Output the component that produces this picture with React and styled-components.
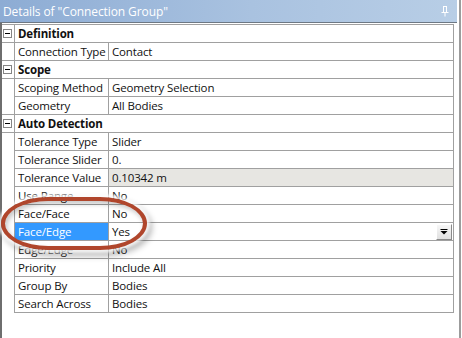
import React from "react";
import styled, { createGlobalStyle } from "styled-components";

const Global = createGlobalStyle`
  html, body { margin: 0; padding: 0; background: #fff; }
  body { font-family: "Open Sans", "Noto Sans", sans-serif; }
`;

const Frame = styled.div`
  position: relative;
  width: 462px;
  height: 338px;
  display: flex;
  background: #fff;
  overflow: hidden;
`;

const Panel = styled.div`
  width: 457px;
  display: flex;
  flex-direction: column;
`;

const RightEdge = styled.div`
  width: 2px;
  margin-left: 2px;
  background: #9c9c9c;
`;

const TitleBar = styled.div`
  height: 22px;
  border-bottom: 1px solid #6d7884;
  background: linear-gradient(to right, #8dacd4 0%, #a9c2e0 55%, #b8cee6 100%);
  display: flex;
  align-items: center;
  justify-content: space-between;
  padding: 0 8px 0 3px;
  color: #fff;
  font-size: 12px;
  letter-spacing: -0.1px;
  white-space: nowrap;
`;

const Body = styled.div`
  flex: 1;
  border-left: 2px solid #6e6e6e;
  padding: 1px 3px 0 0;
`;

const Row = styled.div`
  display: grid;
  grid-template-columns: 12px 94px 346px;
  height: ${(p) => (p.$first ? 19 : 18)}px;
  font-size: 11.5px;
  letter-spacing: -0.15px;
  line-height: 17px;
  color: #111;
`;

const Gutter = styled.div`
  border-top: ${(p) => (p.$first ? "1px solid #a0a0a0" : "none")};
  border-bottom: ${(p) => (p.$line ? "1px solid #a0a0a0" : "none")};
  display: flex;
  align-items: flex-start;
`;

const Cell = styled.div`
  border-left: 1px solid #a0a0a0;
  border-bottom: 1px solid #a0a0a0;
  border-top: ${(p) => (p.$first ? "1px solid #a0a0a0" : "none")};
  padding-left: 3px;
  white-space: nowrap;
  overflow: hidden;
`;

const LabelCell = styled(Cell)`
  background: ${(p) => (p.$selected ? "#3399ff" : "#fff")};
  color: ${(p) => (p.$selected ? "#fff" : "#111")};
`;

const ValueCell = styled(Cell)`
  border-right: 1px solid #a0a0a0;
  background: ${(p) => (p.$shaded ? "#e7e6e2" : "#fff")};
  display: flex;
  justify-content: space-between;
`;

const HeaderCell = styled(Cell)`
  grid-column: 2 / span 2;
  border-right: 1px solid #a0a0a0;
  font-weight: 700;
`;

const MinusBox = styled.div`
  box-sizing: border-box;
  width: 9px;
  height: 9px;
  margin: 4px 0 0 1px;
  border: 1px solid #858585;
  background: #fff;
  display: flex;
  align-items: center;
  justify-content: center;
  &::after {
    content: "";
    width: 5px;
    height: 1px;
    background: #000;
  }
`;

const DropButton = styled.div`
  box-sizing: border-box;
  width: 16px;
  height: 16px;
  margin: 1px 1px 0 0;
  background: linear-gradient(#f7f7f7, #e0e0e0);
  border-top: 1px solid #fff;
  border-left: 1px solid #fff;
  border-right: 1px solid #8a8a8a;
  border-bottom: 1px solid #8a8a8a;
  display: flex;
  align-items: center;
  justify-content: center;
`;

const Oval = styled.div`
  position: absolute;
  left: 1px;
  top: 197px;
  width: 146px;
  height: 53px;
  box-sizing: border-box;
  border: 4px solid #b0462c;
  border-radius: 48px / 27px;
  box-shadow: 0 0 3px 3px rgba(255, 255, 255, 0.8),
    3px 4px 6px 2px rgba(0, 0, 0, 0.28),
    inset 2px 3px 5px rgba(0, 0, 0, 0.22);
  pointer-events: none;
`;

const Pin = () => (
  <svg width="8" height="11" viewBox="0 0 8 11">
    <path d="M2 0.5h4M2.5 0.5v6M5.5 0.5v6M0.5 6.5h7M4 6.5v4" stroke="#fff" strokeWidth="1" fill="none" />
  </svg>
);

const Arrow = () => (
  <svg width="8" height="6" viewBox="0 0 8 6">
    <path d="M0.5 0.5h7" stroke="#000" strokeWidth="1" />
    <path d="M0.5 2h7L4 5.5z" fill="#000" />
  </svg>
);

const groups = [
  {
    title: "Definition",
    rows: [{ label: "Connection Type", value: "Contact" }],
  },
  {
    title: "Scope",
    rows: [
      { label: "Scoping Method", value: "Geometry Selection" },
      { label: "Geometry", value: "All Bodies" },
    ],
  },
  {
    title: "Auto Detection",
    rows: [
      { label: "Tolerance Type", value: "Slider" },
      { label: "Tolerance Slider", value: "0." },
      { label: "Tolerance Value", value: "0.10342 m", shaded: true },
      { label: "Use Range", value: "No" },
      { label: "Face/Face", value: "No" },
      { label: "Face/Edge", value: "Yes", selected: true },
      { label: "Edge/Edge", value: "No" },
      { label: "Priority", value: "Include All" },
      { label: "Group By", value: "Bodies" },
      { label: "Search Across", value: "Bodies" },
    ],
  },
];

export default function App() {
  const out = [];
  groups.forEach((g, gi) => {
    out.push(
      <Row key={g.title} $first={gi === 0}>
        <Gutter $first={gi === 0} $line>
          <MinusBox />
        </Gutter>
        <HeaderCell $first={gi === 0}>{g.title}</HeaderCell>
      </Row>
    );
    g.rows.forEach((r, ri) => {
      const beforeHeader = ri === g.rows.length - 1 && gi < groups.length - 1;
      out.push(
        <Row key={r.label}>
          <Gutter $line={beforeHeader} />
          <LabelCell $selected={r.selected}>{r.label}</LabelCell>
          <ValueCell $shaded={r.shaded}>
            <span>{r.value}</span>
            {r.selected && (
              <DropButton>
                <Arrow />
              </DropButton>
            )}
          </ValueCell>
        </Row>
      );
    });
  });

  return (
    <>
      <Global />
      <Frame>
        <Panel>
          <TitleBar>
            <span>Details of "Connection Group"</span>
            <Pin />
          </TitleBar>
          <Body>{out}</Body>
        </Panel>
        <RightEdge />
        <Oval />
      </Frame>
    </>
  );
}
